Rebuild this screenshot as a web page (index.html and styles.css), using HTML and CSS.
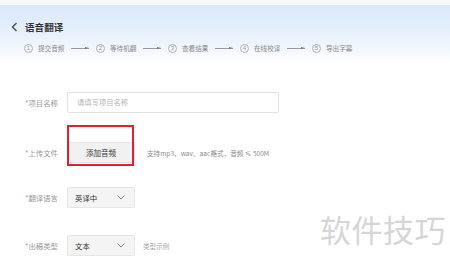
FILE: index.html
```html
<!DOCTYPE html>
<html lang="zh">
<head>
<meta charset="utf-8">
<link rel="stylesheet" href="styles.css">
</head>
<body>
<div class="page">
  <header class="header">
    <div class="title-row">
      <svg class="back" width="7" height="10" viewBox="0 0 7 10"><path d="M5.5 1 L1.5 5 L5.5 9" fill="none" stroke="#444" stroke-width="1.3"/></svg>
      <span class="title">语音翻译</span>
    </div>
    <div class="steps">
      <span class="step"><span class="num">1</span><span class="stxt">提交音频</span></span>
      <span class="arrow"></span>
      <span class="step"><span class="num">2</span><span class="stxt">等待机翻</span></span>
      <span class="arrow"></span>
      <span class="step"><span class="num">3</span><span class="stxt">查看结果</span></span>
      <span class="arrow"></span>
      <span class="step"><span class="num">4</span><span class="stxt">在线校译</span></span>
      <span class="arrow"></span>
      <span class="step"><span class="num">5</span><span class="stxt">导出字幕</span></span>
    </div>
  </header>
  <main class="form">
    <div class="row row-name">
      <label class="label">*项目名称</label>
      <div class="input">请填写项目名称</div>
    </div>
    <div class="row row-upload">
      <label class="label">*上传文件</label>
      <div class="btn-wrap">
        <div class="btn">添加音频</div>
        <div class="mark"></div>
      </div>
      <span class="hint">支持mp3、wav、aac格式，音频 ≤ 500M</span>
    </div>
    <div class="row row-lang">
      <label class="label">*翻译语言</label>
      <div class="select"><span>英译中</span><svg width="8" height="5" viewBox="0 0 8 5"><path d="M0.5 0.5 L4 4 L7.5 0.5" fill="none" stroke="#777" stroke-width="0.9"/></svg></div>
    </div>
    <div class="row row-type">
      <label class="label">*出稿类型</label>
      <div class="select"><span>文本</span><svg width="8" height="5" viewBox="0 0 8 5"><path d="M0.5 0.5 L4 4 L7.5 0.5" fill="none" stroke="#777" stroke-width="0.9"/></svg></div>
      <span class="hint hint-type">类型示例</span>
    </div>
  </main>
  <div class="watermark">软件技巧</div>
</div>
</body>
</html>
```

FILE: styles.css
```css
* { box-sizing: border-box; }
html, body { margin: 0; padding: 0; background: #fff; }
body {
  font-family: "Noto Sans CJK SC", "Noto Sans", sans-serif;
  width: 450px;
  height: 264px;
  overflow: hidden;
}
.page { position: relative; width: 450px; height: 264px; }
.header {
  height: 66px;
  border-top: 5px solid #f7f8fa;
  background: linear-gradient(to bottom, #d9e9fb 0%, #e6f0fc 45%, #ffffff 100%);
  padding-left: 11px;
}
.title-row {
  display: flex;
  align-items: center;
  height: 12px;
  margin-top: 16px;
}
.back { margin-right: 7px; }
.title {
  font-size: 9.5px;
  font-weight: 700;
  color: #333;
  letter-spacing: 0.1px;
}
.steps {
  display: flex;
  align-items: center;
  margin-top: 9px;
  padding-left: 13px;
  height: 12px;
}
.step { display: flex; align-items: center; }
.num {
  width: 9px;
  height: 9px;
  border: 0.8px solid #b0b0b0;
  border-radius: 50%;
  font-size: 6px;
  line-height: 7.5px;
  text-align: center;
  color: #999;
  font-family: "Liberation Sans", sans-serif;
}
.stxt {
  margin-left: 5px;
  font-size: 6.6px;
  color: #888;
  width: 27px;
  white-space: nowrap;
}
.arrow {
  position: relative;
  width: 18px;
  height: 0.6px;
  background: #999;
  margin: 0 7px 0 6px;
}
.arrow::after {
  content: "";
  position: absolute;
  right: 0;
  top: -1px;
  border-left: 4px solid #777;
  border-top: 1px solid transparent;
  border-bottom: 0.6px solid transparent;
}
.form { padding-left: 25px; }
.row { display: flex; align-items: center; height: 21px; }
.row-name { margin-top: 26px; }
.row-upload { margin-top: 29px; }
.row-lang { margin-top: 24px; }
.row-type { margin-top: 27px; }
.label {
  width: 42px;
  font-size: 7.4px;
  color: #999;
  white-space: nowrap;
}
.input {
  width: 212px;
  height: 21px;
  border: 1px solid #e2e2e2;
  border-radius: 2px;
  padding-left: 9px;
  font-size: 7.3px;
  line-height: 19px;
  color: #b5b5b5;
}
.btn-wrap { position: relative; }
.btn {
  width: 68px;
  height: 21px;
  background: #f1f1f1;
  border: 1px solid #e6e6e6;
  font-size: 7.5px;
  line-height: 19px;
  text-align: center;
  color: #333;
}
.mark {
  position: absolute;
  left: 0;
  top: -17px;
  width: 67px;
  height: 41px;
  border: 2px solid #e0222f;
}
.hint {
  margin-left: 12px;
  font-size: 6.6px;
  color: #8a8a8a;
  white-space: nowrap;
}
.hint-type { margin-left: 8px; color: #aaa; }
.select {
  width: 68px;
  height: 21px;
  background: #f4f4f4;
  border: 1px solid #e6e6e6;
  border-radius: 2px;
  display: flex;
  align-items: center;
  justify-content: space-between;
  padding: 0 9px 0 7px;
  font-size: 7.4px;
  color: #333;
}
.watermark {
  position: absolute;
  left: 320px;
  top: 209px;
  font-size: 31px;
  line-height: 40px;
  color: #d6d6d6;
  letter-spacing: 0.5px;
  white-space: nowrap;
}
```
